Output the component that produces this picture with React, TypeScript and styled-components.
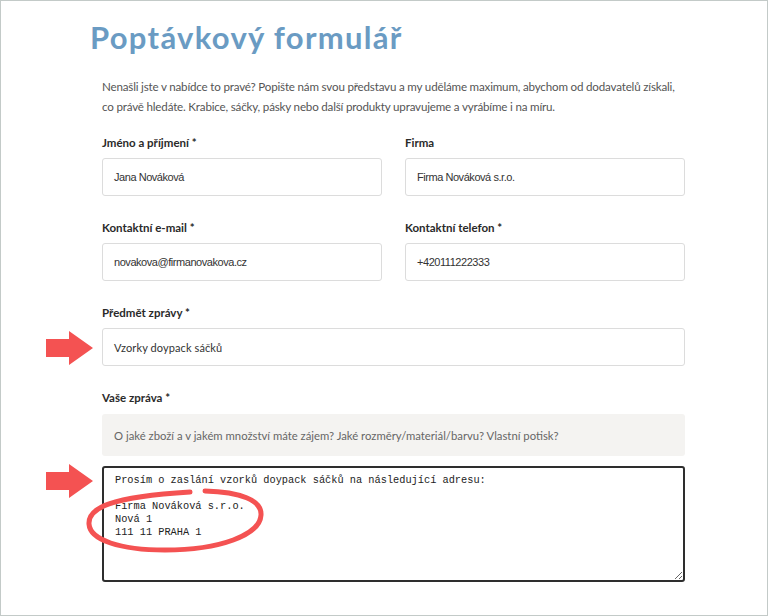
import React from "react";
import styled, { createGlobalStyle } from "styled-components";

const Global = createGlobalStyle`
  html, body { margin: 0; padding: 0; background: #fff; }
  * { box-sizing: border-box; }
`;

const Frame = styled.div`
  width: 768px;
  height: 616px;
  border: 1px solid #c3cac8;
  overflow: hidden;
  font-family: Lato, "Noto Sans", sans-serif;
  color: #333;
`;

const Title = styled.h1`
  margin: 0;
  padding: 16px 0 0 89px;
  font-family: Lato, "Noto Sans", sans-serif;
  font-weight: 700;
  font-size: 31px;
  line-height: 40px;
  color: #6a9bc3;
  letter-spacing: 1.3px;
`;

const Form = styled.div`
  width: 583px;
  margin: 20px 0 0 101px;
  display: flex;
  flex-direction: column;
`;

const Intro = styled.p`
  margin: 0 0 18px 0;
  font-size: 11.6px;
  line-height: 20px;
  color: #555;
  letter-spacing: -0.18px;
  white-space: nowrap;
`;

const Row = styled.div`
  display: grid;
  grid-template-columns: 280px 280px;
  column-gap: 23px;
  margin-bottom: 24px;
`;

const Field = styled.div<{ $gap?: number }>`
  position: relative;
  display: flex;
  flex-direction: column;
  margin-bottom: ${(p) => p.$gap ?? 0}px;
`;

const Label = styled.label`
  font-family: Lato, "Noto Sans", sans-serif;
  font-weight: 700;
  font-size: 11.5px;
  line-height: 16px;
  color: #2a2a2a;
  margin-bottom: 7px;
`;

const Input = styled.div<{ $big?: boolean }>`
  height: 38px;
  border: 1px solid #dcdcdc;
  border-radius: 3px;
  background: #fff;
  display: flex;
  align-items: center;
  padding-left: 11px;
  font-family: ${(p) =>
    p.$big ? 'Lato, "Noto Sans", sans-serif' : '"Liberation Sans", Arial, sans-serif'};
  font-size: 11px;
  letter-spacing: ${(p) => (p.$big ? "0.1px" : "-0.45px")};
  color: #333;
`;

const Hint = styled.div`
  height: 42px;
  margin-top: 1px;
  background: #f4f3f1;
  border-radius: 3px;
  display: flex;
  align-items: center;
  padding-left: 12px;
  font-size: 11.3px;
  color: #666;
  margin-bottom: 10px;
`;

const TextWrap = styled.div`
  position: relative;
`;

const Area = styled.textarea`
  display: block;
  width: 583px;
  height: 116px;
  border: 2px solid #2e2e2e;
  border-radius: 3px;
  padding: 6px 11px;
  font-family: "Liberation Mono", "Courier New", monospace;
  font-size: 10.3px;
  line-height: 13px;
  color: #222;
  background: #fff;
  outline: none;
`;

const Arrow = styled.svg<{ $top: number }>`
  position: absolute;
  left: -56px;
  top: ${(p) => p.$top}px;
  width: 48px;
  height: 34px;
`;

const Circle = styled.svg`
  position: absolute;
  left: -20px;
  top: 20px;
  width: 190px;
  height: 72px;
  pointer-events: none;
`;

const RED = "#f45252";

const RedArrow = ({ top }: { top: number }) => (
  <Arrow $top={top} viewBox="0 0 48 34">
    <polygon points="0,8 23,8 23,0 47,17 23,34 23,26 0,26" fill={RED} />
  </Arrow>
);

export default function App() {
  return (
    <Frame>
      <Global />
      <Title>Poptávkový formulář</Title>
      <Form>
        <Intro>
          Nenašli jste v nabídce to pravé? Popište nám svou představu a my uděláme maximum, abychom od dodavatelů získali,
          <br />
          co právě hledáte. Krabice, sáčky, pásky nebo další produkty upravujeme a vyrábíme i na míru.
        </Intro>
        <Row>
          <Field>
            <Label>Jméno a příjmení *</Label>
            <Input>Jana Nováková</Input>
          </Field>
          <Field>
            <Label>Firma</Label>
            <Input>Firma Nováková s.r.o.</Input>
          </Field>
        </Row>
        <Row>
          <Field>
            <Label>Kontaktní e-mail *</Label>
            <Input>novakova@firmanovakova.cz</Input>
          </Field>
          <Field>
            <Label>Kontaktní telefon *</Label>
            <Input>+420111222333</Input>
          </Field>
        </Row>
        <Field $gap={24}>
          <Label>Předmět zprávy *</Label>
          <Input $big>Vzorky doypack sáčků</Input>
          <RedArrow top={26} />
        </Field>
        <Field>
          <Label>Vaše zpráva *</Label>
          <Hint>O jaké zboží a v jakém množství máte zájem? Jaké rozměry/materiál/barvu? Vlastní potisk?</Hint>
          <TextWrap>
            <Area
              readOnly
              spellCheck={false}
              defaultValue={"Prosím o zaslání vzorků doypack sáčků na následující adresu:\n\nFirma Nováková s.r.o.\nNová 1\n111 11 PRAHA 1"}
            />
            <RedArrow top={-2} />
            <Circle viewBox="0 0 190 72">
              <path
                d="M 123 5 C 158 6, 180 14, 179 29 C 178 49, 138 64, 83 64 C 38 64, 8 54, 7 38 C 6 22, 28 11, 108 6"
                fill="none"
                stroke={RED}
                strokeWidth={5}
                strokeLinecap="round"
              />
            </Circle>
          </TextWrap>
        </Field>
      </Form>
    </Frame>
  );
}
